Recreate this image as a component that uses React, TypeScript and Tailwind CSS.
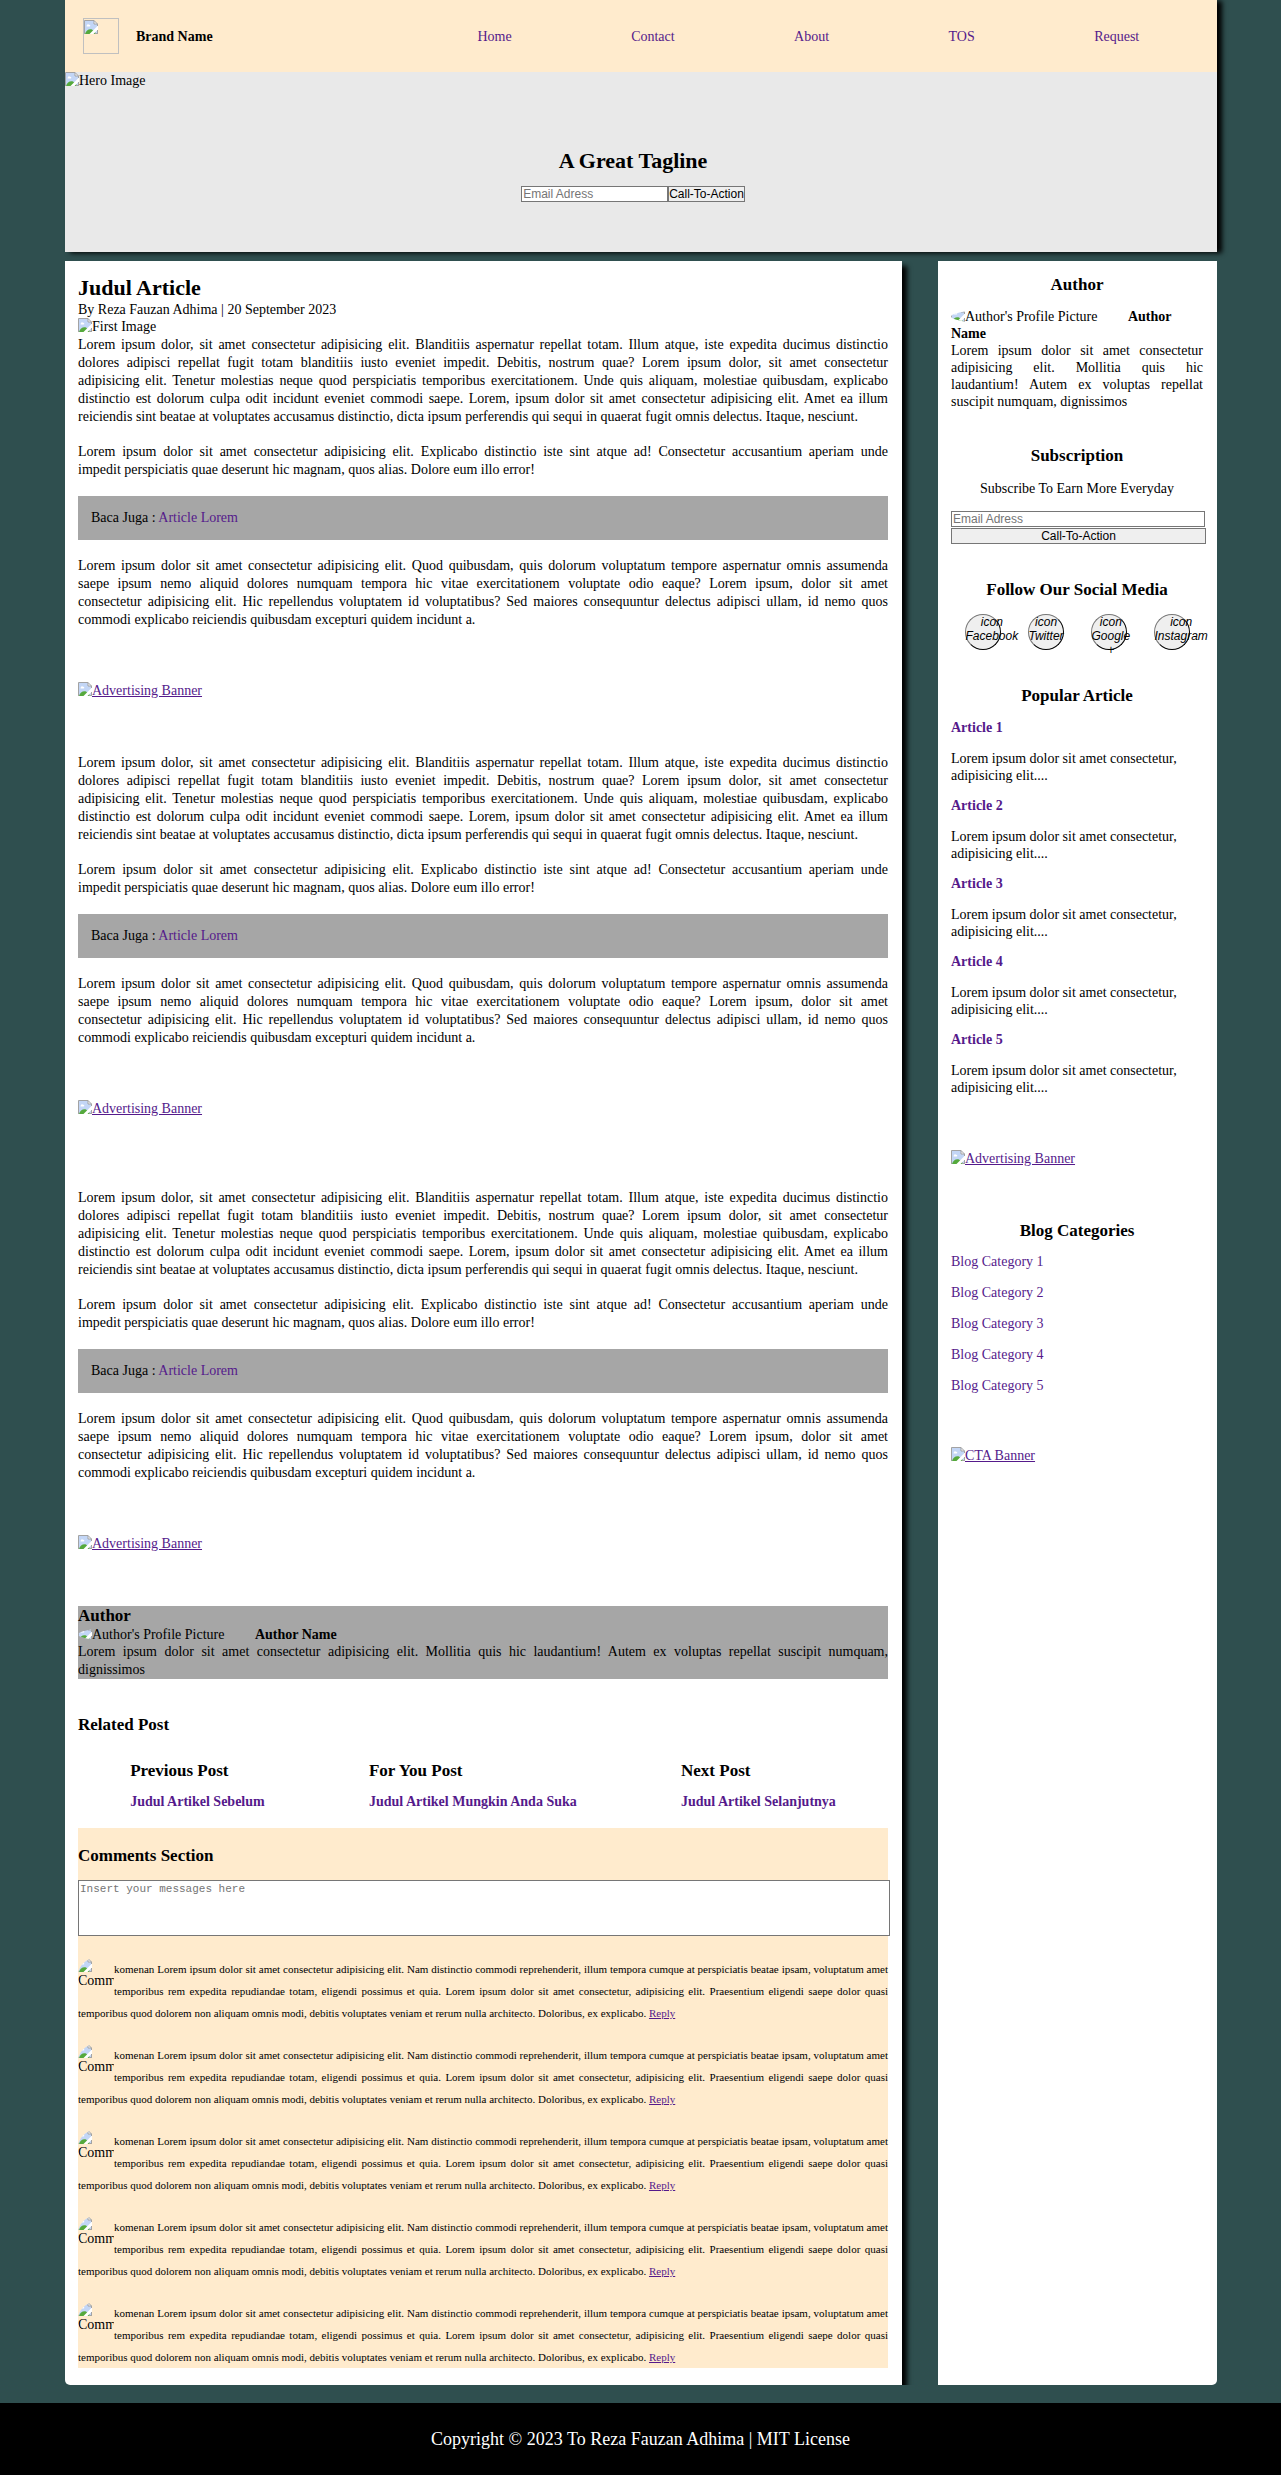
import React from "react";

const P1 = [
  "Lorem ipsum dolor, sit amet consectetur adipisicing elit. Blanditiis aspernatur repellat totam. Illum atque, iste expedita ducimus distinctio",
  "dolores adipisci repellat fugit totam blanditiis iusto eveniet impedit. Debitis, nostrum quae? Lorem ipsum dolor, sit amet consectetur",
  "adipisicing elit. Tenetur molestias neque quod perspiciatis temporibus exercitationem. Unde quis aliquam, molestiae quibusdam, explicabo",
  "distinctio est dolorum culpa odit incidunt eveniet commodi saepe. Lorem, ipsum dolor sit amet consectetur adipisicing elit. Amet ea illum",
  "reiciendis sint beatae at voluptates accusamus distinctio, dicta ipsum perferendis qui sequi in quaerat fugit omnis delectus. Itaque, nesciunt.",
];
const P2 = [
  "Lorem ipsum dolor sit amet consectetur adipisicing elit. Explicabo distinctio iste sint atque ad! Consectetur accusantium aperiam unde",
  "impedit perspiciatis quae deserunt hic magnam, quos alias. Dolore eum illo error!",
];
const P3 = [
  "Lorem ipsum dolor sit amet consectetur adipisicing elit. Quod quibusdam, quis dolorum voluptatum tempore aspernatur omnis assumenda",
  "saepe ipsum nemo aliquid dolores numquam tempora hic vitae exercitationem voluptate odio eaque? Lorem ipsum, dolor sit amet",
  "consectetur adipisicing elit. Hic repellendus voluptatem id voluptatibus? Sed maiores consequuntur delectus adipisci ullam, id nemo quos",
  "commodi explicabo reiciendis quibusdam excepturi quidem incidunt a.",
];
const BIO =
  "Lorem ipsum dolor sit amet consectetur adipisicing elit. Mollitia quis hic laudantium! Autem ex voluptas repellat suscipit numquam, dignissimos";
const COMMENT =
  "komenan Lorem ipsum dolor sit amet consectetur adipisicing elit. Nam distinctio commodi reprehenderit, illum tempora cumque at perspiciatis beatae ipsam, voluptatum amet temporibus rem expedita repudiandae totam, eligendi possimus et quia. Lorem ipsum dolor sit amet consectetur, adipisicing elit. Praesentium eligendi saepe dolor quasi temporibus quod dolorem non aliquam omnis modi, debitis voluptates veniam et rerum nulla architecto. Doloribus, ex explicabo.";

function BrokenImage({ clip }: { clip?: boolean }) {
  return (
    <svg viewBox="0 0 14 14" className="inline-block h-3.5 w-3.5 shrink-0 align-top" aria-hidden="true">
      <defs>
        <clipPath id="wide-ellipse">
          <ellipse cx="75" cy="8.5" rx="75" ry="8.5" />
        </clipPath>
      </defs>
      <g clipPath={clip ? "url(#wide-ellipse)" : undefined}>
        <path d="M0.5 0.5H10L13.5 4V14H0.5Z" fill="#c3d6f6" />
        <path d="M3 5.5C3 4 4.800 4 5 4.800C6.500 4.500 6.800 6.500 5.500 6.500H3.200C2 6.500 2 5.500 3 5.500Z" fill="#fff" />
        <path d="M1 14C2 10.500 5 8.500 8 9.500L13 14Z" fill="#55a93c" />
        <path d="M14 5.500L5.500 14H9.500L14 9.500Z" fill="#fff" />
        <path d="M10 0.500V4H13.500Z" fill="#fff" />
        <path
          d="M0.500 14V0.500H10L13.500 4V6M10 0.500V4H13.500M13.500 10V14M11 13.500H14"
          fill="none"
          stroke="#a3a3a3"
        />
      </g>
    </svg>
  );
}

function Banner({ label, className }: { label: string; className: string }) {
  return (
    <div className={className}>
      <a href="#" className="flex w-fit text-[#551a8b]">
        <BrokenImage />
        <span className="underline">{label}</span>
      </a>
    </div>
  );
}

function AuthorLine() {
  return (
    <div>
      <span className="mr-[27px] inline-flex align-top">
        <BrokenImage clip />
        <span>Author's Profile Picture</span>
      </span>{" "}
      <b>Author Name</b>
    </div>
  );
}

/* On wide screens every line but the last fills the measure; below that the text reflows. */
function Paragraph({ lines }: { lines: string[] }) {
  return (
    <p>
      {lines.map((line, i) => (
        <span key={i} className={i < lines.length - 1 ? "xl:block xl:[text-align-last:justify]" : "xl:block"}>
          {line}{" "}
        </span>
      ))}
    </p>
  );
}

function ArticleBody({ className }: { className: string }) {
  return (
    <div className={className}>
      <div className="flex flex-col gap-[17px] text-justify leading-[18px]">
        <Paragraph lines={P1} />
        <Paragraph lines={P2} />
        <p className="bg-[#a6a6a6] p-[13px]">
          Baca Juga :{" "}
          <a href="#" className="text-[#551a8b]">
            Article Lorem
          </a>
        </p>
        <Paragraph lines={P3} />
      </div>
      <Banner label="Advertising Banner" className="mt-[53px] h-[18px]" />
    </div>
  );
}

const h3 = "text-[17px] leading-5 font-bold";

export default function App() {
  return (
    <div className="bg-[#2f4f4f] font-['Liberation_Serif',serif] text-sm leading-[17px] text-black">
      <div className="pr-16 pl-[65px]">
        <div className="shadow-[5px_1px_5px_#000]">
          <header className="flex h-18 items-center bg-[#ffebcd] px-[18px]">
            <div className="flex flex-[3] items-center gap-[17px]">
              <span className="h-9 w-9 border border-[#c0c0c0] pt-px">
                <BrokenImage />
              </span>
              <b>Brand Name</b>
            </div>
            <nav className="flex flex-[7] justify-around">
              {["Home", "Contact", "About", "TOS", "Request"].map((n) => (
                <a key={n} href="#" className="text-[#551a8b]">
                  {n}
                </a>
              ))}
            </nav>
          </header>
          <section className="h-45 bg-[#e9e9e9]">
            <div className="flex">
              <BrokenImage />
              <span>Hero Image</span>
            </div>
            <div className="flex flex-col items-center gap-3 pt-[59px] pr-4">
              <h1 className="text-[22px] leading-[26px] font-bold">A Great Tagline</h1>
              <form className="flex font-['Liberation_Sans',sans-serif] text-xs leading-[14px]">
                <input
                  aria-label="Email Adress"
                  placeholder="Email Adress"
                  className="h-4 w-[147px] border border-[#767676] bg-white px-px placeholder:text-[#757575]"
                />
                <button type="button" className="h-4 border border-[#767676] bg-[#efefef]">
                  Call-To-Action
                </button>
              </form>
            </div>
          </section>
        </div>

        <div className="mt-[9px] grid grid-cols-[minmax(0,3fr)_minmax(0,1fr)] gap-9 overflow-hidden rounded-b-[5px]">
          <main className="bg-white pt-[13px] pr-3.5 pb-[17px] pl-[13px] shadow-[5px_5px_5px_#000]">
            <h2 className="text-[22px] leading-[27px] font-bold">Judul Article</h2>
            <p>By Reza Fauzan Adhima | 20 September 2023</p>
            <div className="flex h-[18px]">
              <BrokenImage />
              <span>First Image</span>
            </div>
            <ArticleBody className="" />
            <ArticleBody className="mt-[54px]" />
            <ArticleBody className="mt-[71px]" />

            <section className="mt-[53px] bg-[#a6a6a6]">
              <h3 className={h3}>Author</h3>
              <AuthorLine />
              <p className="text-justify leading-[18px]">{BIO}</p>
            </section>

            <section className="mt-9">
              <h3 className={h3}>Related Post</h3>
              <div className="mt-[26px] flex justify-around">
                {[
                  ["Previous Post", "Judul Artikel Sebelum"],
                  ["For You Post", "Judul Artikel Mungkin Anda Suka"],
                  ["Next Post", "Judul Artikel Selanjutnya"],
                ].map(([a, b]) => (
                  <div key={a}>
                    <h3 className={h3}>{a}</h3>
                    <a href="#" className="mt-3 block font-bold text-[#551a8b]">
                      {b}
                    </a>
                  </div>
                ))}
              </div>
            </section>

            <section className="mt-[18px] bg-[#ffebcd] pt-[18px]">
              <h3 className={h3}>Comments Section</h3>
              <textarea
                aria-label="Comment"
                placeholder="Insert your messages here"
                className="mt-3.5 block h-14 w-[calc(100%+2px)] resize-none border border-[#767676] bg-white px-px py-0.5 font-['Liberation_Mono',monospace] text-[11px] leading-[13px] placeholder:text-[#757575]"
              />
              <div className="mt-[22px] flex flex-col gap-5">
                {[1, 2, 3, 4, 5].map((n) => (
                  <article key={n} className="text-justify text-[11px] leading-[22px]">
                    <span className="float-left h-9 w-9 overflow-hidden rounded-full text-left text-sm leading-[17px]">
                      <span className="block h-3.5 leading-3.5">
                        <BrokenImage />
                      </span>
                      <span className="block">Comment</span>
                    </span>
                    {COMMENT}{" "}
                    <a href="#" className="text-[#551a8b] underline">
                      Reply
                    </a>
                  </article>
                ))}
              </div>
            </section>
          </main>

          <aside className="bg-white pt-3.5 pr-3.5 pl-[13px]">
            <section>
              <h3 className={h3 + " text-center"}>Author</h3>
              <div className="mt-[13px]">
                <AuthorLine />
              </div>
              <p className="text-justify">{BIO}</p>
            </section>

            <section className="mt-9">
              <h3 className={h3 + " text-center"}>Subscription</h3>
              <p className="mt-3.5 text-center">Subscribe To Earn More Everyday</p>
              <form className="mt-3.5 font-['Liberation_Sans',sans-serif] text-xs leading-[14px]">
                <input
                  aria-label="Email Adress"
                  placeholder="Email Adress"
                  className="block h-4 w-[calc(100%+2px)] border border-[#767676] bg-white px-px placeholder:text-[#757575]"
                />
                <button
                  type="button"
                  className="mt-px block h-4 w-[calc(100%+3px)] border border-[#767676] bg-[#efefef]"
                >
                  Call-To-Action
                </button>
              </form>
            </section>

            <section className="mt-9">
              <h3 className={h3 + " text-center"}>Follow Our Social Media</h3>
              <div className="mt-3.5 grid grid-cols-4 justify-items-center font-['Liberation_Sans',sans-serif] text-xs leading-[14px] italic">
                {["Facebook", "Twitter", "Google +", "Instagram"].map((n) => (
                  <button
                    key={n}
                    type="button"
                    className="flex h-9 w-9 items-start justify-start rounded-full border border-t-[#767676] border-r-black border-b-black border-l-[#767676] bg-[#efefef]"
                  >
                    <span className="w-min shrink-0 text-center">icon {n}</span>
                  </button>
                ))}
              </div>
            </section>

            <section className="mt-9">
              <h3 className={h3 + " text-center"}>Popular Article</h3>
              <div className="mt-[13px] flex flex-col gap-[13px]">
                {[1, 2, 3, 4, 5].map((n) => (
                  <div key={n}>
                    <a href="#" className="block font-bold text-[#551a8b]">
                      Article {n}
                    </a>
                    <p className="mt-3.5">Lorem ipsum dolor sit amet consectetur, adipisicing elit....</p>
                  </div>
                ))}
              </div>
            </section>

            <Banner label="Advertising Banner" className="mt-[54px]" />

            <section className="mt-[54px]">
              <h3 className={h3 + " text-center"}>Blog Categories</h3>
              <div className="mt-3 flex flex-col gap-3.5">
                {[1, 2, 3, 4, 5].map((n) => (
                  <a key={n} href="#" className="text-[#551a8b]">
                    Blog Category {n}
                  </a>
                ))}
              </div>
            </section>

            <Banner label="CTA Banner" className="mt-[53px]" />
          </aside>
        </div>
      </div>
      <footer className="mt-[18px] flex h-18 items-center justify-center bg-black text-lg text-white">
        Copyright © 2023 To Reza Fauzan Adhima | MIT License
      </footer>
    </div>
  );
}
